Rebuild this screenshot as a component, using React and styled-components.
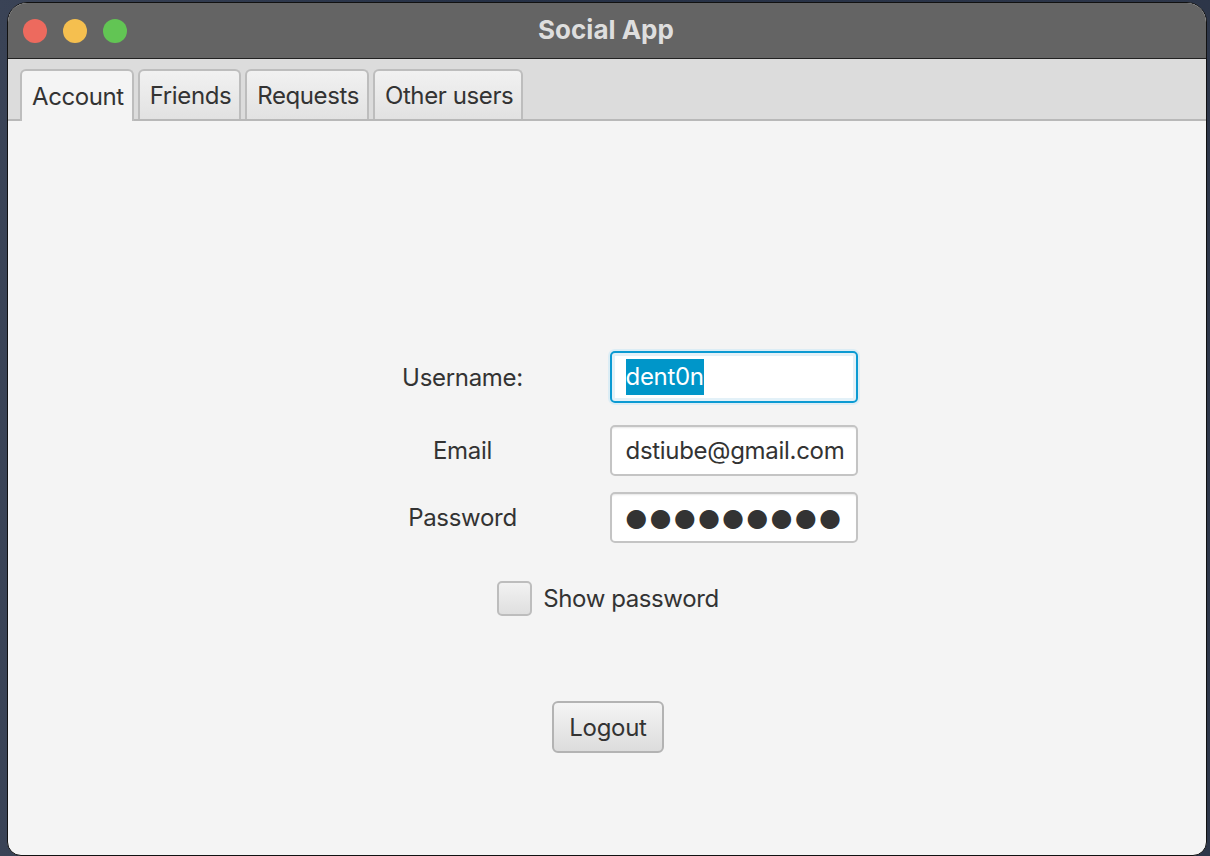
import React from "react";
import styled, { createGlobalStyle } from "styled-components";

const GlobalStyle = createGlobalStyle`
  html, body {
    margin: 0;
    padding: 0;
    background: #2c3548;
    overflow: hidden;
  }
  * {
    box-sizing: border-box;
  }
`;

const Desktop = styled.div`
  width: 1210px;
  height: 856px;
  padding: 2px 3px 0 7px;
  background: linear-gradient(90deg, #3a4356 0%, #253045 40%, #2d3649 100%);
  overflow: hidden;
`;

const Window = styled.div`
  display: flex;
  flex-direction: column;
  height: 854px;
  border: 1px solid #111;
  border-radius: 20px 20px 14px 14px;
  overflow: hidden;
  background: #f4f4f4;
  font-family: Inter, "Noto Sans", sans-serif;
  color: #333;
`;

const TitleBar = styled.div`
  position: relative;
  display: flex;
  align-items: center;
  justify-content: center;
  height: 56px;
  flex: none;
  background: #646464;
  border-bottom: 1px solid #222;
`;

const Lights = styled.div`
  position: absolute;
  left: 15px;
  top: 16px;
  display: flex;
  gap: 16px;
`;

const Light = styled.span`
  width: 24px;
  height: 24px;
  border-radius: 50%;
  background: ${(p) => p.color};
`;

const Title = styled.div`
  font-size: 26px;
  font-weight: 700;
  color: #dedede;
  margin: -3px 0 0 -2px;
`;

const TabHeader = styled.div`
  display: flex;
  align-items: flex-end;
  gap: 4px;
  height: 62px;
  flex: none;
  padding: 0 12px;
  background: #dcdcdc;
  border-bottom: 2px solid #b8b8b8;
`;

const Tab = styled.div`
  display: flex;
  align-items: center;
  height: ${(p) => (p.active ? "52px" : "50px")};
  margin-bottom: ${(p) => (p.active ? "-2px" : "0")};
  padding: 0 8px 0 10px;
  font-size: 24px;
  letter-spacing: -0.4px;
  color: #333;
  border: 2px solid #bdbdbd;
  border-bottom: none;
  border-radius: 6px 6px 0 0;
  background: ${(p) =>
    p.active ? "#f4f4f4" : "linear-gradient(#f1f1f1, #e2e2e2)"};
`;

const Content = styled.div`
  flex: 1;
  display: flex;
  flex-direction: column;
  align-items: center;
  padding-top: 230px;
`;

const Form = styled.div`
  display: grid;
  grid-template-columns: 126px 248px;
  column-gap: 84px;
  row-gap: 16px;
  align-items: center;
  margin-left: 43px;
`;

const Label = styled.div`
  text-align: center;
  font-size: 24px;
  letter-spacing: -0.3px;
  color: #333;
  margin-bottom: ${(p) => p.gap || 0}px;
`;

const Field = styled.div`
  display: flex;
  align-items: center;
  height: ${(p) => (p.focused ? "52px" : "51px")};
  padding: 0 14px;
  font-size: 24px;
  letter-spacing: -0.3px;
  white-space: nowrap;
  overflow: hidden;
  background: #fff;
  border-radius: 5px;
  border: ${(p) => (p.focused ? "2px solid #0b9ad2" : "2px solid #c4c4c4")};
  box-shadow: ${(p) =>
    p.focused
      ? "0 0 0 2px #dcedf5, inset 0 0 0 3px #e3f1f8"
      : "inset 0 2px 2px -1px #e6e6e6"};
  margin-bottom: ${(p) => p.gap || 0}px;
`;

const Selected = styled.span`
  background: #0096c9;
  color: #fff;
  padding: 3px 0 4px;
`;

const Dots = styled.span`
  font-family: "DejaVu Sans", sans-serif;
  font-size: 25px;
  letter-spacing: 2.4px;
  color: #333;
  line-height: 1;
`;

const CheckRow = styled.label`
  display: flex;
  align-items: center;
  gap: 11px;
  margin-top: 38px;
  margin-left: 2px;
  font-size: 24px;
  letter-spacing: -0.4px;
  color: #333;
`;

const CheckBox = styled.span`
  width: 35px;
  height: 35px;
  border: 2px solid #bdbdbd;
  border-radius: 5px;
  background: linear-gradient(#f2f2f2, #dfdfdf);
`;

const Button = styled.button`
  margin-top: 85px;
  margin-left: 2px;
  width: 112px;
  height: 52px;
  font-family: Inter, "Noto Sans", sans-serif;
  font-size: 24px;
  letter-spacing: -0.3px;
  color: #333;
  border: 2px solid #b3b3b3;
  border-radius: 6px;
  background: linear-gradient(#f4f4f4, #dcdcdc);
  cursor: pointer;
`;

const tabs = ["Account", "Friends", "Requests", "Other users"];

export default function App() {
  return (
    <Desktop>
      <GlobalStyle />
      <Window>
        <TitleBar>
          <Lights>
            <Light color="#ed6a5e" />
            <Light color="#f5bf4f" />
            <Light color="#62c554" />
          </Lights>
          <Title>Social App</Title>
        </TitleBar>
        <TabHeader>
          {tabs.map((t, i) => (
            <Tab key={t} active={i === 0}>
              {t}
            </Tab>
          ))}
        </TabHeader>
        <Content>
          <Form>
            <Label gap={6}>Username:</Label>
            <Field focused gap={6}>
              <Selected>dent0n</Selected>
            </Field>
            <Label>Email</Label>
            <Field>dstiube@gmail.com</Field>
            <Label>Password</Label>
            <Field>
              <Dots>●●●●●●●●●</Dots>
            </Field>
          </Form>
          <CheckRow>
            <CheckBox />
            Show password
          </CheckRow>
          <Button>Logout</Button>
        </Content>
      </Window>
    </Desktop>
  );
}
